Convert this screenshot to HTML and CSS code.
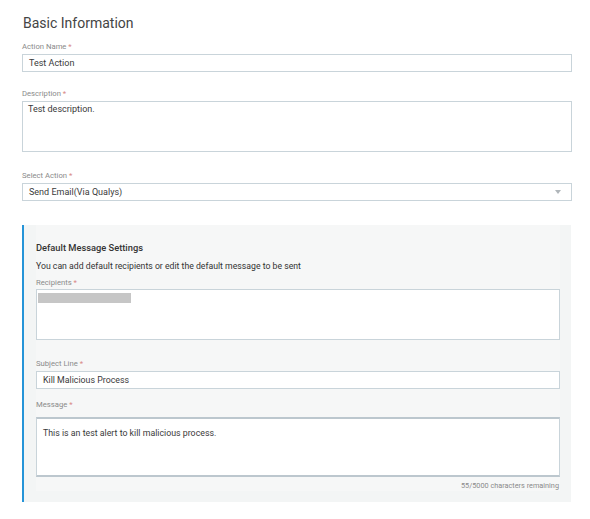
FILE: index.html
```html
<!DOCTYPE html>
<html>
<head>
<meta charset="utf-8">
<link rel="stylesheet" href="styles.css">
</head>
<body>
<div class="page">
  <h1 class="title">Basic Information</h1>

  <div class="field f-name">
    <div class="label">Action Name <span class="req">*</span></div>
    <div class="input">Test Action</div>
  </div>

  <div class="field f-desc">
    <div class="label">Description <span class="req">*</span></div>
    <div class="textarea">Test description.</div>
  </div>

  <div class="field f-select">
    <div class="label">Select Action <span class="req">*</span></div>
    <div class="input select">
      <span>Send Email(Via Qualys)</span>
      <span class="arrow"></span>
    </div>
  </div>

  <div class="panel">
    <div class="inner">
      <div class="ptitle">Default Message Settings</div>
      <div class="pdesc">You can add default recipients or edit the default message to be sent</div>

      <div class="label l-recip">Recipients <span class="req">*</span></div>
      <div class="recipients"><span class="chip"></span></div>

      <div class="label l-subject">Subject Line <span class="req">*</span></div>
      <div class="input subject">Kill Malicious Process</div>

      <div class="label l-message">Message <span class="req">*</span></div>
      <div class="message">This is an test alert to kill malicious process.</div>
      <div class="counter">55/5000 characters remaining</div>
    </div>
  </div>
</div>
</body>
</html>
```

FILE: styles.css
```css
* { box-sizing: border-box; }
html, body { margin: 0; padding: 0; background: #fff; }
body { font-family: Roboto, "Liberation Sans", Arial, sans-serif; color: #3a3a3a; }

.page { width: 550px; margin-left: 22px; padding-top: 15px; }

.title { margin: 0 0 0 1px; font-size: 14px; line-height: 16px; font-weight: 400; color: #444; }

.label { font-size: 7.7px; line-height: 10px; color: #8a8a8a; }
.req { color: #d98a86; }

.f-name { margin-top: 11px; }
.f-desc { margin-top: 17px; }
.f-select { margin-top: 19px; }

.field .label { margin-bottom: 2px; }

.input {
  height: 18px;
  border: 1px solid #c9d4da;
  background: #fff;
  font-size: 9px;
  line-height: 16px;
  padding-left: 6px;
  color: #3a3a3a;
}

.textarea {
  height: 51px;
  border: 1px solid #c9d4da;
  background: #fff;
  font-size: 9px;
  line-height: 12px;
  padding: 1px 5px;
  color: #3a3a3a;
}

.select { display: flex; align-items: center; justify-content: space-between; padding-right: 10px; }
.arrow {
  width: 0; height: 0;
  border-left: 3px solid transparent;
  border-right: 3px solid transparent;
  border-top: 4px solid #b0b6ba;
}

.panel {
  margin-top: 24px;
  width: 549px;
  background: #f3f5f5;
  border-left: 2px solid #2594d8;
  padding: 0 11px 11px 12px;
}

.inner { background: #f6f7f7; padding-top: 17px; }

.ptitle { font-size: 9.3px; line-height: 12px; font-weight: 500; color: #333; }
.pdesc { margin-top: 6px; font-size: 8.7px; line-height: 12px; color: #333; }
.l-recip { margin-top: 6px; margin-bottom: 1px; }

.recipients {
  height: 51px;
  border: 1px solid #c9d4da;
  background: #fff;
  padding: 3px 1px;
}
.chip { display: block; width: 93px; height: 10px; background: #c6c6c6; }

.l-subject { margin-top: 19px; margin-bottom: 2px; }
.subject { padding-left: 6px; font-size: 8.8px; }

.l-message { margin-top: 11px; margin-bottom: 7px; }
.message {
  height: 60px;
  border: 1px solid #c9d4da;
  border-top: 2px solid #bcc7ce;
  border-bottom: 2px solid #bcc7ce;
  background: #fff;
  font-size: 8.8px;
  line-height: 12px;
  padding: 8px 6px;
  color: #3a3a3a;
}
.counter { margin-top: 4px; text-align: right; font-size: 7.3px; line-height: 10px; color: #8a8a8a; padding-right: 1px; }
```
